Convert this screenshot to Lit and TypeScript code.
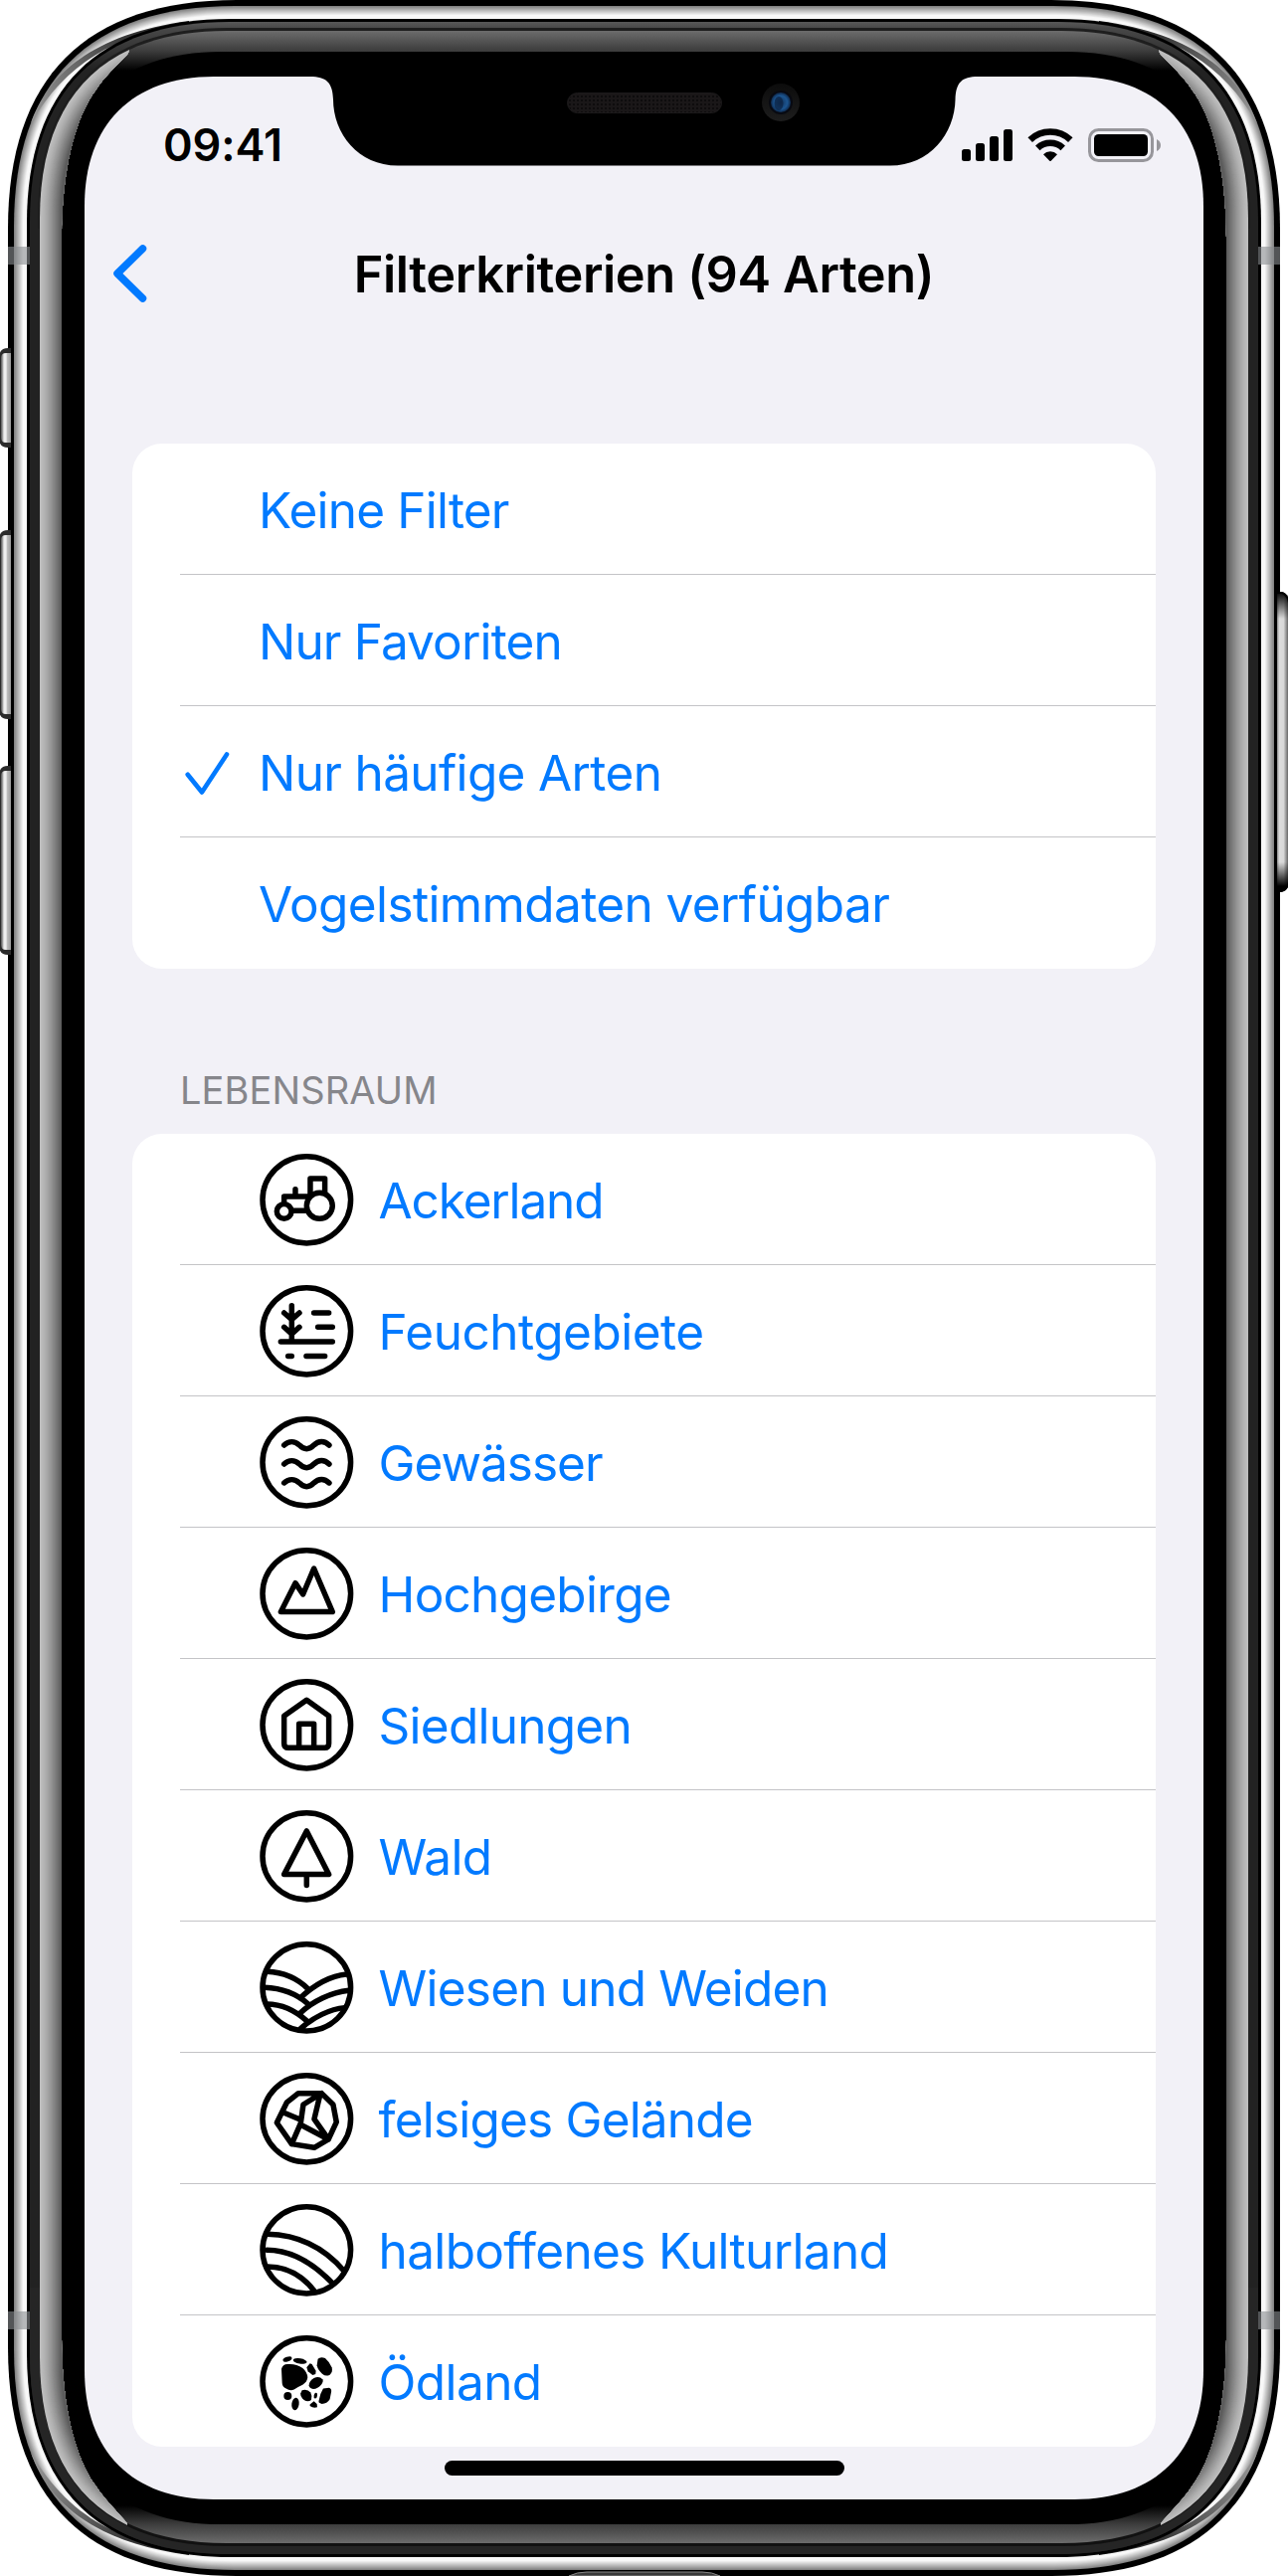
import { LitElement, html, css, svg, nothing } from "lit";
import { customElement, property, state } from "lit/decorators.js";
import { styleMap } from "lit/directives/style-map.js";

/** Icon artwork, drawn around the origin inside a 284 unit square. */
const ICONS: Record<string, unknown> = {
  acker: svg`<circle cx="-68" cy="35" r="22"/><circle cx="39" cy="18" r="39"/>
    <path d="M11-18V-64H55V-20M-68 10V-10H5M-34-32V-10M-42 33H0"/>`,
  feucht: svg`<path d="M-45-77V31M-68-55L-45-35L-22-55M-68-12L-45 9L-22-12M22-55H67M34-12H78M-78 32H78M-56 76H-45M-1 76H55"/>`,
  wasser: svg`${[-52, 5, 62].map(
    (y) => svg`<path transform="translate(0 ${y})" d="M-68 0C-54-13-36-13-22 0C-8 15 8 15 22 0C36-14 54-14 68 0"/>`
  )}`,
  berge: svg`<path d="M-78 55L-34-32L-11 2L22-76L78 55Z"/>`,
  haus: svg`<path d="M-68-27L0-75L67-27V56Q67 69 54 69H-55Q-68 69-68 56ZM-23 69V-3H22V69"/>`,
  wald: svg`<path d="M0-76L67 55H-68ZM0 55V88"/>`,
  wiesen: svg`<path d="M-120-48C-70-46-25-25 5 5M-127 0C-75 2-35 15 5 50M-120 50C-75 50-35 68 3 103M120-40C70-35 20-5-20 32M127 9C75 15 20 40-20 78M115 61C70 65 20 90-18 124"/>`,
  fels: svg`<path d="M-25-77H45L80-43L90 10L66 62L23 87L-45 76L-90 12L-60-49ZM45-77L-10-43L-18 14L-45 76M-68-18L-18 3M-18 18L66 62M40-70L23 1L66 62"/>`,
  kultur: svg`<path d="M-118-48C-30-46 50-10 112 62M-120 0C-60 0 10 30 78 100M-118 50C-65 50-15 75 22 122"/>`,
  oed: svg`<g fill="#000" stroke="none">
    <path d="M-76-38Q-72-53-56-52Q-32-54-12-40Q2-28 3-12Q2 2-12 10Q-26 16-38 25Q-50 30-62 22Q-74 16-74 4Z"/>
    <ellipse cx="-58" cy="-67" rx="14" ry="7" transform="rotate(-18 -58 -67)"/>
    <ellipse cx="-20" cy="-61" rx="21" ry="8" transform="rotate(9 -20 -61)"/>
    <path d="M10-54L0-42L4-30L18-19L27-22L28-32L16-52Z"/>
    <path d="M34-68Q42-76 56-70Q68-60 76-42Q80-28 70-20Q58-14 48-22Q34-34 31-48Z"/>
    <path d="M22-10Q38-18 48-6Q52 0 44 10Q34 22 20 23Q8 22 7 12Q8-2 22-10Z"/>
    <path d="M-14 27Q2 22 12 34Q18 46 14 56Q4 64-8 56Q-20 46-18 36Z"/>
    <circle cx="-57" cy="44" r="12"/>
    <ellipse cx="-34" cy="68" rx="11" ry="19" transform="rotate(8 -34 68)"/>
    <ellipse cx="27" cy="43" rx="5" ry="9" transform="rotate(10 27 43)"/>
    <path d="M50 22L68 19Q77 22 74 34L70 54Q62 68 46 68Q34 66 37 58L42 38Z"/>
    <path d="M10 70L22 60L31 68L32 78Q20 82 10 74Z"/>
  </g>`,
};

interface Item {
  label: string;
  icon?: string;
  /** Letter spacing of the label in px. */
  tracking: number;
}

const FILTERS: Item[] = [
  { label: "Keine Filter", tracking: -0.8 },
  { label: "Nur Favoriten", tracking: -0.85 },
  { label: "Nur häufige Arten", tracking: -0.65 },
  { label: "Vogelstimmdaten verfügbar", tracking: -0.62 },
];

const HABITATS: Item[] = [
  { label: "Ackerland", icon: "acker", tracking: -1.15 },
  { label: "Feuchtgebiete", icon: "feucht", tracking: -0.5 },
  { label: "Gewässer", icon: "wasser", tracking: -1 },
  { label: "Hochgebirge", icon: "berge", tracking: -0.75 },
  { label: "Siedlungen", icon: "haus", tracking: -0.75 },
  { label: "Wald", icon: "wald", tracking: -0.6 },
  { label: "Wiesen und Weiden", icon: "wiesen", tracking: -0.8 },
  { label: "felsiges Gelände", icon: "fels", tracking: -0.8 },
  { label: "halboffenes Kulturland", icon: "kultur", tracking: -0.66 },
  { label: "Ödland", icon: "oed", tracking: -0.6 },
];

/** Closed path with continuous corners: e is the corner extent, a the handle position. */
function shell(l: number, t: number, e: number, a: number): string {
  const r = 1295 - l;
  const b = 2590 - t;
  return (
    `M${l} ${t + e}C${l} ${t + a} ${l + a} ${t} ${l + e} ${t}H${r - e}` +
    `C${r - a} ${t} ${r} ${t + a} ${r} ${t + e}V${b - e}` +
    `C${r} ${b - a} ${r - a} ${b} ${r - e} ${b}H${l + e}` +
    `C${l + a} ${b} ${l} ${b - a} ${l} ${b - e}Z`
  );
}

/** Shell path at a given depth, blended from the outer edge to the glass edge. */
function layer(l: number, t: number): string {
  const k = (l - 8) / 77;
  return shell(l, t, 230 - 100 * k, 78 - 30 * k);
}

const grey = (v: number) => `rgb(${Math.round(v)},${Math.round(v)},${Math.round(v)})`;

@customElement("device-frame")
class DeviceFrame extends LitElement {
  static styles = css`
    :host {
      display: block;
    }
    svg {
      display: block;
    }
  `;

  render() {
    const metal = Array.from({ length: 13 }, (_, i) => i);
    const band = Array.from({ length: 22 }, (_, i) => i);
    const corners = ["", "matrix(-1 0 0 1 1295 0)", "matrix(1 0 0 -1 0 2590)", "matrix(-1 0 0 -1 1295 2590)"];
    return html`<svg width="1295" height="2590" viewBox="0 0 1295 2590">
      <defs>
        <linearGradient id="btn" x1="0" x2="1" y1="0" y2="0">
          <stop offset="0" stop-color="#555" />
          <stop offset=".15" stop-color="#999" />
          <stop offset=".3" stop-color="#eee" />
          <stop offset=".5" stop-color="#eee" />
          <stop offset=".65" stop-color="#bbb" />
          <stop offset="1" stop-color="#999" />
        </linearGradient>
        <linearGradient id="side" x1="0" x2="1" y1="0" y2="0">
          <stop offset="0" stop-color="#888" />
          <stop offset=".2" stop-color="#dcdcdc" />
          <stop offset=".6" stop-color="#d8d8d8" />
          <stop offset="1" stop-color="#666" />
        </linearGradient>
        <linearGradient id="sideCap" x1="0" x2="0" y1="0" y2="1">
          <stop offset="0" stop-color="#000" />
          <stop offset=".09" stop-color="#000" stop-opacity="0" />
          <stop offset=".9" stop-color="#000" stop-opacity="0" />
          <stop offset=".98" stop-color="#000" />
        </linearGradient>
        <linearGradient id="rimTop" gradientUnits="userSpaceOnUse" x1="0" x2="0" y1="22" y2="70">
          <stop offset="0" stop-color="#585858" />
          <stop offset=".13" stop-color="#484848" />
          <stop offset="1" stop-color="#222" />
        </linearGradient>
        <linearGradient id="bandTop" gradientUnits="userSpaceOnUse" x1="0" x2="0" y1="31" y2="71">
          <stop offset="0" stop-color="#6c6c6c" />
          <stop offset=".5" stop-color="#3d3d3d" />
          <stop offset="1" stop-color="#000" />
        </linearGradient>
        <linearGradient id="bandBottom" gradientUnits="userSpaceOnUse" x1="0" x2="0" y1="2557" y2="2519">
          <stop offset="0" stop-color="#6c6c6c" />
          <stop offset=".5" stop-color="#3d3d3d" />
          <stop offset="1" stop-color="#000" />
        </linearGradient>
        <linearGradient id="glint" gradientUnits="userSpaceOnUse" x1="30" x2="190" y1="120" y2="24">
          <stop offset="0" stop-color="#999" />
          <stop offset=".35" stop-color="#6a6a6a" />
          <stop offset=".65" stop-color="#3a3a3a" />
          <stop offset="1" stop-color="#1a1a1a" />
        </linearGradient>
        <radialGradient id="lens" cx=".5" cy=".5" r=".55">
          <stop offset="0" stop-color="#12335c" />
          <stop offset=".6" stop-color="#1c5590" />
          <stop offset="1" stop-color="#0a1c38" />
        </radialGradient>
        <linearGradient id="ring" x1="0" x2="0" y1="0" y2="1">
          <stop offset="0" stop-color="#0c0c0c" />
          <stop offset="1" stop-color="#1d1d1d" />
        </linearGradient>
        <pattern id="mesh" width="4" height="4" patternUnits="userSpaceOnUse">
          <rect width="4" height="4" fill="#1a1718" />
          <rect width="2" height="2" fill="#0e0c0d" />
        </pattern>
        <clipPath id="wedge">
          <path
            d="M0 240V20H60L129 44Q132 50 128 55C117 66 106 76 96 91C76 118 62 170 62 240V2350C62 2420 76 2472 96 2499C106 2514 117 2524 128 2537V2560H0Z
               M1295 240V20H1235L1166 44Q1163 50 1167 55C1178 66 1189 76 1199 91C1219 118 1233 170 1233 240V2350C1233 2420 1219 2472 1199 2499C1189 2514 1178 2524 1167 2537V2560H1295Z"
          />
        </clipPath>
        <clipPath id="lower"><rect x="0" y="2300" width="1295" height="290" /></clipPath>
      </defs>

      <path d=${layer(8, 0)} fill="#000" />
      ${metal.map((i) => svg`<path d=${layer(14 + i, 6 + i)} fill=${grey(Math.min(248, 132 + i * 13))}/>`)}
      ${corners.map(
        (m) => svg`<path transform=${m} d="M31 124C48 76 92 34 190 21L190 25C116 34 66 64 31 124Z" fill="url(#glint)"/>`
      )}
      <path d=${layer(27, 19)} fill="#000" />
      <path d=${layer(30, 22)} fill="url(#rimTop)" />
      <path d=${layer(38, 28)} fill="#1e1e1e" />
      <path d="M30 230H40V2360H30ZM1255 230H1265V2360H1255Z" fill="#222" />
      <path d=${layer(40, 31)} fill="url(#bandTop)" />
      <g clip-path="url(#lower)">
        <path d=${layer(30, 22)} fill="#252525" />
        <path d=${layer(40, 30)} fill="#111" />
        <path d=${layer(42, 33)} fill="url(#bandBottom)" />
      </g>
      <path d=${layer(62, 52)} fill="#000" />
      <g clip-path="url(#wedge)">
        ${band.map((i) => svg`<path d=${layer(40 + i, 31 + i)} fill=${grey(190 - Math.pow(i / 21, 1.3) * 98)}/>`)}
      </g>

      ${[248, 2324].map(
        (y) => svg`<g transform="translate(0 ${y})" fill="#8b8d91" fill-opacity=".6">
          <rect x="8" width="22" height="18"/><rect x="1265" width="22" height="18"/></g>`
      )}
      ${[
        [350, 100],
        [533, 190],
        [770, 190],
      ].map(
        ([y, h]) => svg`<path d="M11 ${y}H8Q0 ${y}-1 ${y + 8}V${y + h - 8}Q0 ${y + h} 8 ${y + h}H11Z" fill="#2b2b2b"/>
          <path d="M11 ${y + 5}H6Q1 ${y + 5} 1 ${y + 10}V${y + h - 10}Q1 ${y + h - 5} 6 ${y + h - 5}H11Z" fill="url(#btn)"/>`
      )}
      <path d="M1284 595H1288Q1295 596 1296 604V888Q1295 896 1288 897H1284Z" fill="#000" />
      <path d="M1284 597H1289Q1294 600 1295 606V886Q1294 892 1289 895H1284Z" fill="url(#side)" />
      <path d="M1284 595H1288Q1295 596 1296 604V888Q1295 896 1288 897H1284Z" fill="url(#sideCap)" />
      <path d="M572 2590Q580 2586 590 2586H706Q716 2586 724 2590Z" fill="#3a3a3a" stroke="#888" stroke-width="1" />

      <path d=${shell(85, 77, 130, 48)} fill="#f2f1f7" />
      <path
        d="M308 70V77H312C328 77 334.500 83 335 100C335 134 360 166.500 400 166.500H895C935 166.500 960 134 960.500 100C961 83 967 77 983 77H990V70Z"
        fill="#000"
      />
      <rect x="570.500" y="93.500" width="155" height="20" rx="10" fill="url(#mesh)" stroke="#1c1a1b" />
      <circle cx="785" cy="103" r="19" fill="url(#ring)" />
      <circle cx="785" cy="103" r="12" fill="#080a12" />
      <circle cx="785" cy="103" r="10" fill="url(#lens)" />
      <ellipse cx="783" cy="104" rx="4.500" ry="7" fill="#0b2140" opacity=".7" />
    </svg>`;
  }
}

@customElement("status-bar")
class StatusBar extends LitElement {
  static styles = css`
    :host {
      display: flex;
      box-sizing: border-box;
      justify-content: space-between;
      height: 132px;
      padding: 5px 42px 0 79px;
      align-items: center;
    }
    .time {
      font-size: 45px;
      font-weight: 600;
      letter-spacing: -0.1px;
    }
    svg {
      display: block;
    }
  `;

  render() {
    return html`<span class="time">09:41</span>
      <svg width="202" height="36" viewBox="966 128 202 36">
        <rect x="967" y="150" width="9" height="12" rx="2.500" />
        <rect x="981" y="144" width="9" height="18" rx="2.500" />
        <rect x="995" y="137" width="9" height="25" rx="2.500" />
        <rect x="1009" y="130" width="9" height="32" rx="2.500" />
        <g fill="none" stroke="#000" stroke-width="6.600">
          <path d="M1035.700 140.600A29.500 29.500 0 0 1 1076.300 140.600" />
          <path d="M1043.300 148.800A18.500 18.500 0 0 1 1068.700 148.800" />
        </g>
        <path d="M1049 155.200A10 10 0 0 1 1063 155.200L1056.700 161.800Q1056 162.300 1055.300 161.800Z" />
        <rect x="1095.500" y="130.500" width="63" height="31" rx="9" fill="none" stroke="#97969b" stroke-width="3" />
        <rect x="1100" y="135" width="54" height="22" rx="4.500" />
        <path d="M1163 140Q1167 142 1167 146T1163 152Z" fill="#97969b" />
      </svg>`;
  }
}

@customElement("filter-list")
class FilterList extends LitElement {
  @property({ attribute: false }) items: Item[] = [];
  @property({ type: Number }) selected = -1;

  static styles = css`
    :host {
      display: block;
      background: #fff;
      border-radius: 30px;
      overflow: hidden;
    }
    .row {
      display: flex;
      height: 132px;
      padding-left: 48px;
      cursor: pointer;
    }
    .mark {
      width: 80px;
      display: flex;
      align-items: center;
      flex: none;
    }
    .body {
      flex: 1;
      display: flex;
      align-items: center;
      gap: 26px;
    }
    .row:not(:last-child) .mark,
    .row:not(:last-child) .body {
      box-shadow: inset 0 -1px #c4c4c7;
    }
    .label {
      color: #027aff;
      font-size: 49.5px;
      line-height: 60px;
      white-space: pre;
      padding-top: 2px;
      margin-left: -1px;
    }
    svg {
      display: block;
      flex: none;
    }
    .icon {
      fill: none;
      stroke: #000;
      stroke-width: 16.5;
      stroke-linecap: round;
      stroke-linejoin: round;
    }
  `;

  private pick(index: number) {
    this.dispatchEvent(new CustomEvent("pick", { detail: index }));
  }

  render() {
    return this.items.map(
      (item, i) => html`<div class="row" @click=${() => this.pick(i)}>
        <div class="mark">
          ${i === this.selected
            ? html`<svg width="50" height="46" viewBox="181 752 50 46">
                <path
                  d="M188.700 777.700L203 795.500L228 757.500"
                  fill="none"
                  stroke="#027aff"
                  stroke-width="4.600"
                  stroke-linecap="round"
                  stroke-linejoin="round"
                />
              </svg>`
            : nothing}
        </div>
        <div class="body">
          ${item.icon
            ? html`<svg class="icon" width="94.600" height="94.600" viewBox="-142 -142 284 284">
                <ellipse rx="133" ry="131" />
                ${ICONS[item.icon]}
              </svg>`
            : nothing}
          <span class="label" style=${styleMap({ letterSpacing: `${item.tracking}px` })}>${item.label}</span>
        </div>
      </div>`
    );
  }
}

@customElement("app-root")
class AppRoot extends LitElement {
  @state() private filter = 2;

  static styles = css`
    :host {
      display: block;
      position: relative;
      width: 1295px;
      height: 2590px;
      overflow: hidden;
      background: #fff;
      color: #000;
      font-family: Inter, "Liberation Sans", sans-serif;
    }
    .frame {
      position: absolute;
      inset: 0;
    }
    .screen {
      position: relative;
      box-sizing: border-box;
      width: 1125px;
      margin: 0 85px;
      padding-top: 77px;
    }
    .nav {
      display: grid;
      grid-template-columns: 100px 1fr 100px;
      align-items: center;
      height: 132px;
      margin-bottom: 105px;
    }
    .back {
      margin-left: 24px;
      display: block;
    }
    .title {
      margin: 0;
      text-align: center;
      font-size: 50.5px;
      font-weight: 600;
      letter-spacing: -0.4px;
      white-space: pre;
    }
    .content {
      padding: 0 48px;
    }
    .section {
      box-sizing: border-box;
      height: 166px;
      padding: 99px 0 0 48px;
      margin: 0;
      font-size: 38px;
      line-height: 46px;
      font-weight: 400;
      letter-spacing: 0.1px;
      color: #86868b;
    }
    .home {
      position: absolute;
      left: 447px;
      top: 2474px;
      width: 402px;
      height: 15px;
      border-radius: 8px;
      background: #000;
    }
  `;

  render() {
    return html`<device-frame class="frame"></device-frame>
      <main class="screen">
        <status-bar></status-bar>
        <header class="nav">
          <svg class="back" width="44" height="64" viewBox="109 243 44 64">
            <path
              d="M143.500 250L118 275L143.500 300"
              fill="none"
              stroke="#027aff"
              stroke-width="7.500"
              stroke-linecap="round"
              stroke-linejoin="round"
            />
          </svg>
          <h1 class="title">Filterkriterien (94 Arten)</h1>
        </header>
        <div class="content">
          <filter-list
            .items=${FILTERS}
            .selected=${this.filter}
            @pick=${(e: CustomEvent<number>) => (this.filter = e.detail)}
          ></filter-list>
          <h2 class="section">LEBENSRAUM</h2>
          <filter-list .items=${HABITATS}></filter-list>
        </div>
      </main>
      <div class="home"></div>`;
  }
}
